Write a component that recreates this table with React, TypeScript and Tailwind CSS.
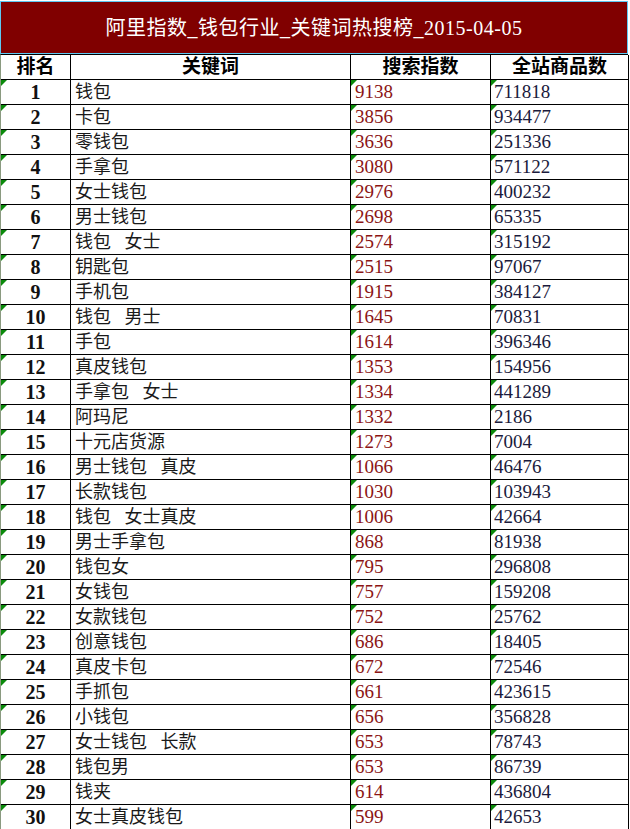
import React from "react"

const rows: Array<[string, number, number]> = [
  ["钱包", 9138, 711818],
  ["卡包", 3856, 934477],
  ["零钱包", 3636, 251336],
  ["手拿包", 3080, 571122],
  ["女士钱包", 2976, 400232],
  ["男士钱包", 2698, 65335],
  ["钱包   女士", 2574, 315192],
  ["钥匙包", 2515, 97067],
  ["手机包", 1915, 384127],
  ["钱包   男士", 1645, 70831],
  ["手包", 1614, 396346],
  ["真皮钱包", 1353, 154956],
  ["手拿包   女士", 1334, 441289],
  ["阿玛尼", 1332, 2186],
  ["十元店货源", 1273, 7004],
  ["男士钱包   真皮", 1066, 46476],
  ["长款钱包", 1030, 103943],
  ["钱包   女士真皮", 1006, 42664],
  ["男士手拿包", 868, 81938],
  ["钱包女", 795, 296808],
  ["女钱包", 757, 159208],
  ["女款钱包", 752, 25762],
  ["创意钱包", 686, 18405],
  ["真皮卡包", 672, 72546],
  ["手抓包", 661, 423615],
  ["小钱包", 656, 356828],
  ["女士钱包   长款", 653, 78743],
  ["钱包男", 653, 86739],
  ["钱夹", 614, 436804],
  ["女士真皮钱包", 599, 42653],
]

const cell = "h-[25px] border-b border-r border-black flex items-center relative"

function Mark() {
  return (
    <span className="absolute left-0 top-0 w-0 h-0 border-t-[6px] border-t-[#0b8a0b] border-r-[6px] border-r-transparent" />
  )
}

export default function App() {
  return (
    <div
      className="w-[630px] h-[829px] overflow-hidden bg-white pt-px"
      style={{ fontFamily: '"Liberation Serif", "Noto Sans CJK SC", serif' }}
    >
      <div className="w-[628px] h-[53px] border border-[#5ec8f2] bg-[#800000] flex items-center justify-center">
        <span className="text-white text-[20px] tracking-[0.5px]">阿里指数_钱包行业_关键词热搜榜_2015-04-05</span>
      </div>
      <div className="w-[628px] grid grid-cols-[70px_280px_140px_138px] border-t border-l border-t-black border-l-[#8a9a80]">
        <div className={cell + " justify-center font-bold text-[19px] text-black"}>排名</div>
        <div className={cell + " justify-center font-bold text-[19px] text-black"}>关键词</div>
        <div className={cell + " justify-center font-bold text-[19px] text-black"}>搜索指数</div>
        <div className={cell + " justify-center font-bold text-[19px] text-black"}>全站商品数</div>
        {rows.map(([kw, idx, cnt], i) => (
          <React.Fragment key={i}>
            <div className={cell + " justify-center font-bold text-[20px] text-[#111]"}>
              <Mark />
              {i + 1}
            </div>
            <div className={cell + " pl-[4px] text-[18px] text-[#1a1a1a] whitespace-pre"}>{kw}</div>
            <div className={cell + " pl-[4px] text-[19px] text-[#8b1414]"}>
              <Mark />
              {idx}
            </div>
            <div className={cell + " pl-[3px] text-[19px] text-[#1a1a3c]"}>
              <Mark />
              {cnt}
            </div>
          </React.Fragment>
        ))}
      </div>
    </div>
  )
}
